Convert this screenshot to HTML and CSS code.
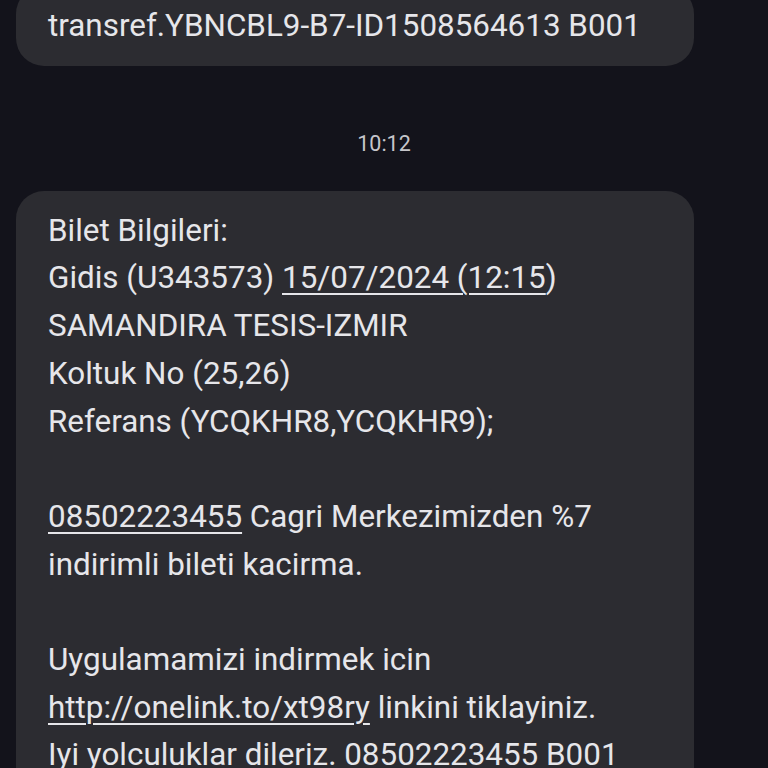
FILE: index.html
```html
<!DOCTYPE html>
<html>
<head>
<meta charset="utf-8">
<link rel="stylesheet" href="styles.css">
</head>
<body>
<div class="thread">
  <div class="bubble first">
    <div class="line">transref.YBNCBL9-B7-ID1508564613 B001</div>
  </div>
  <div class="time">10:12</div>
  <div class="bubble">
    <div class="line">Bilet Bilgileri:</div>
    <div class="line">Gidis (U343573) <span class="link">15/07/2024 (12:15</span>)</div>
    <div class="line">SAMANDIRA TESIS-IZMIR</div>
    <div class="line">Koltuk No (25,26)</div>
    <div class="line">Referans (YCQKHR8,YCQKHR9);</div>
    <div class="line">&nbsp;</div>
    <div class="line"><span class="link">08502223455</span> Cagri Merkezimizden %7</div>
    <div class="line">indirimli bileti kacirma.</div>
    <div class="line">&nbsp;</div>
    <div class="line">Uygulamamizi indirmek icin</div>
    <div class="line"><span class="link">http://onelink.to/xt98ry</span> linkini tiklayiniz.</div>
    <div class="line">Iyi yolculuklar dileriz. 08502223455 B001</div>
  </div>
</div>
</body>
</html>
```
FILE: styles.css
```css
html, body {
  margin: 0;
  padding: 0;
  background: #13131b;
  height: 768px;
  overflow: hidden;
}
.thread {
  display: flex;
  flex-direction: column;
  padding: 0 74px 0 16px;
  font-family: Roboto, "Noto Sans", sans-serif;
  color: #e6e6ea;
}
.bubble {
  background: #2c2c31;
  border-radius: 28px;
  padding: 16px 32px 16px;
}
.bubble.first {
  margin-top: -14px;
}
.line {
  font-size: 31.4px;
  line-height: 47.7px;
  white-space: nowrap;
}
.link {
  text-decoration: underline;
  text-decoration-thickness: 2px;
  text-underline-offset: 5px;
}
.time {
  text-align: center;
  font-size: 21.5px;
  color: #c6c6cb;
  line-height: 30px;
  margin: 63px 0 32px;
  padding-left: 58px;
}
```
